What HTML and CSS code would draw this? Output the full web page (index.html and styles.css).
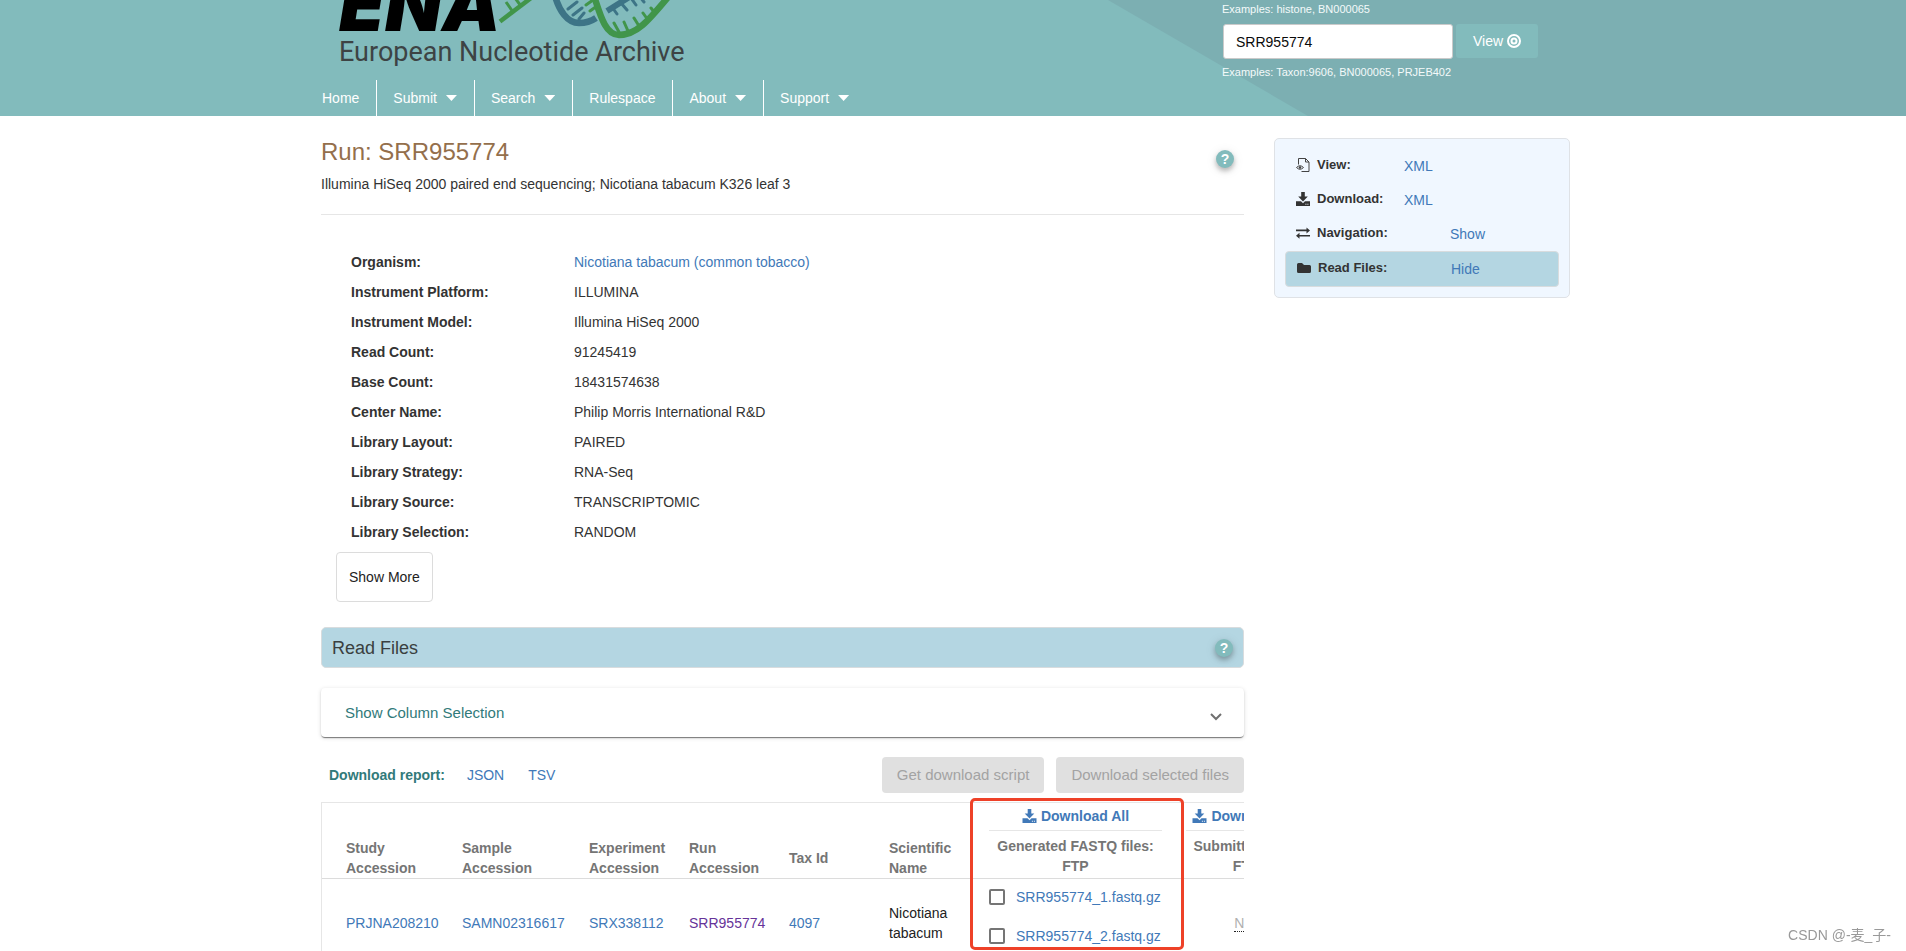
FILE: index.html
```html
<!DOCTYPE html>
<html lang="en">
<head>
<meta charset="utf-8">
<title>ENA Browser - SRR955774</title>
<link rel="stylesheet" href="styles.css">
</head>
<body>
<svg class="symbols" aria-hidden="true">
  <symbol id="i-download" viewBox="0 0 14 14"><path d="M5.200 0h3.600v4.600h3L7 9.400 2.200 4.600h3z"/><path d="M0 9.300h5L7 11.200l2-1.900h5V14H0zM9.400 12.700h1v-1h-1zm2 0h1v-1h-1z" fill-rule="evenodd"/></symbol>
</svg>
<header class="masthead">
  <div class="masthead-inner">
    <div class="brand">
      <svg class="logo" viewBox="0 0 350 66" role="img" aria-label="ENA European Nucleotide Archive">
        <text class="logo-ena" x="4" y="31">ENA</text>
        <g fill="none">
          <g stroke="#41954a">
            <path d="M165 21.500 196-2" stroke-width="4.500"/>
            <path d="M171 2l7 10M180-2l6 8" stroke-width="3"/>
          </g>
          <g stroke="#3d7486">
            <path d="M220-4C224 10 232 23 244 23 250 23 255 22 261 18" stroke-width="6.500"/>
            <path d="M233 9l9-7M238 15l9-7M244 19l5-6" stroke-width="3" stroke-linecap="round"/>
            <path d="M272 11 296-4" stroke-width="6"/>
            <path d="M277 7l5 7M286 3l6 7M296-2l5 7M305-3l4 5" stroke-width="3" stroke-linecap="round"/>
          </g>
          <g stroke="#41954a">
            <path d="M259-4C265 14 270 35 284 35 302 35 314 20 334-4" stroke-width="6.500"/>
            <path d="M251 5l7-5M255 11l7-5M279 23l5 9M289 22l4 9M299 18l5 8M308 13l5 7M316 8l4 5" stroke-width="3" stroke-linecap="round"/>
          </g>
        </g>
        <text class="logo-name" x="4" y="61">European Nucleotide Archive</text>
      </svg>
      <nav class="nav">
        <a href="#">Home</a>
        <a href="#" class="has-menu">Submit</a>
        <a href="#" class="has-menu">Search</a>
        <a href="#">Rulespace</a>
        <a href="#" class="has-menu">About</a>
        <a href="#" class="has-menu">Support</a>
      </nav>
    </div>
    <form class="search">
      <p class="hint">Examples: histone, BN000065</p>
      <div class="search-row">
        <input class="search-input" type="text" aria-label="View accession" value="SRR955774">
        <button class="search-btn" type="button">View
          <svg width="14" height="14" viewBox="0 0 14 14" fill="none" stroke="#fff" stroke-width="2"><circle cx="7" cy="7" r="6"/><circle cx="7" cy="7" r="2.500"/></svg>
        </button>
      </div>
      <p class="hint">Examples: Taxon:9606, BN000065, PRJEB402</p>
    </form>
  </div>
</header>

<div class="page">
  <main class="main">
    <div class="title-row">
      <div>
        <h1>Run: SRR955774</h1>
        <p class="subtitle">Illumina HiSeq 2000 paired end sequencing; Nicotiana tabacum K326 leaf 3</p>
      </div>
      <button class="help" type="button" aria-label="Help">?</button>
    </div>

    <dl class="fields">
      <dt>Organism:</dt><dd><a href="#">Nicotiana tabacum (common tobacco)</a></dd>
      <dt>Instrument Platform:</dt><dd>ILLUMINA</dd>
      <dt>Instrument Model:</dt><dd>Illumina HiSeq 2000</dd>
      <dt>Read Count:</dt><dd>91245419</dd>
      <dt>Base Count:</dt><dd>18431574638</dd>
      <dt>Center Name:</dt><dd>Philip Morris International R&amp;D</dd>
      <dt>Library Layout:</dt><dd>PAIRED</dd>
      <dt>Library Strategy:</dt><dd>RNA-Seq</dd>
      <dt>Library Source:</dt><dd>TRANSCRIPTOMIC</dd>
      <dt>Library Selection:</dt><dd>RANDOM</dd>
    </dl>
    <button class="show-more" type="button">Show More</button>

    <div class="section-bar">
      <h2>Read Files</h2>
      <button class="help" type="button" aria-label="Help">?</button>
    </div>

    <button class="expander" type="button">
      <span>Show Column Selection</span>
      <svg class="chevron" width="12" height="8" viewBox="0 0 12 8" fill="none" stroke="#707070" stroke-width="2"><path d="M1 1l5 5 5-5"/></svg>
    </button>

    <div class="report-row">
      <div class="report-links">
        <strong>Download report:</strong>
        <a href="#">JSON</a>
        <a href="#">TSV</a>
      </div>
      <button class="grey-btn" type="button" disabled>Get download script</button>
      <button class="grey-btn" type="button" disabled>Download selected files</button>
    </div>

    <div class="table-wrap">
      <div class="table-clip">
        <table class="files">
          <colgroup><col class="c-study"><col class="c-sample"><col class="c-exp"><col class="c-run"><col class="c-tax"><col class="c-sci"><col class="c-fastq"><col class="c-sub"></colgroup>
          <thead>
            <tr>
              <th><span>Study Accession</span></th>
              <th><span>Sample Accession</span></th>
              <th><span>Experiment Accession</span></th>
              <th><span>Run Accession</span></th>
              <th><span>Tax Id</span></th>
              <th><span>Scientific Name</span></th>
              <th class="file-head">
                <a class="dl-all" href="#"><svg width="15" height="14"><use href="#i-download"/></svg>Download All</a>
                <div>Generated FASTQ files: FTP</div>
              </th>
              <th class="file-head">
                <a class="dl-all" href="#"><svg width="15" height="14"><use href="#i-download"/></svg>Download All</a>
                <div>Submitted files: FTP</div>
              </th>
            </tr>
          </thead>
          <tbody>
            <tr>
              <td><a href="#">PRJNA208210</a></td>
              <td><a href="#">SAMN02316617</a></td>
              <td><a href="#">SRX338112</a></td>
              <td><a class="visited" href="#">SRR955774</a></td>
              <td><a href="#">4097</a></td>
              <td>Nicotiana tabacum</td>
              <td class="file-cell">
                <div class="file"><input type="checkbox" aria-label="SRR955774_1.fastq.gz"><a href="#">SRR955774_1.fastq.gz</a></div>
                <div class="file"><input type="checkbox" aria-label="SRR955774_2.fastq.gz"><a href="#">SRR955774_2.fastq.gz</a></div>
              </td>
              <td class="na-cell"><abbr title="Not available">N/A</abbr></td>
            </tr>
          </tbody>
        </table>
      </div>
      <div class="callout"></div>
    </div>
  </main>

  <aside class="side">
    <div class="side-row">
      <svg width="14" height="14" viewBox="0 0 14 14" fill="none" stroke="#444"><path d="M2.500 6.500V.5H9.500L13 4V13.500H5.500M9.500.5V4H13"/><path d="M.5 9.500Q4 6 7.500 9.500 4 13 .5 9.500z"/><circle cx="4" cy="9.500" r="1.200" fill="#444" stroke="none"/></svg>
      <strong>View:</strong><a href="#">XML</a>
    </div>
    <div class="side-row">
      <svg width="14" height="14" fill="#333"><use href="#i-download"/></svg>
      <strong>Download:</strong><a href="#">XML</a>
    </div>
    <div class="side-row wide">
      <svg width="14" height="14" viewBox="0 0 14 14" fill="#333"><path d="M0 3.600h10.500V1.500L14 4.500l-3.500 3V5.300H0zM14 8.900H3.500V6.800L0 9.800l3.500 3v-2.200H14z"/></svg>
      <strong>Navigation:</strong><a href="#">Show</a>
    </div>
    <div class="side-row wide active">
      <svg width="14" height="14" viewBox="0 0 14 14" fill="#333"><path d="M0 3.500Q0 2 1.500 2H5l2 2h5.500Q14 4 14 5.500v5Q14 12 12.500 12h-11Q0 12 0 10.500z"/></svg>
      <strong>Read Files:</strong><a href="#">Hide</a>
    </div>
  </aside>
</div>
<div class="watermark">CSDN @-麦_子-</div>
</body>
</html>
```

FILE: styles.css
```css
* { box-sizing: border-box; }

body {
  margin: 0;
  height: 100vh;
  overflow: hidden;
  background: #fff;
  color: #333;
  font: 14px/20px "Liberation Sans", Arial, "Noto Sans CJK SC", sans-serif;
}

a { color: #4179b8; text-decoration: none; }
button, input { font: inherit; }
h1, h2, p, dl, dd { margin: 0; }
.symbols { position: absolute; width: 0; height: 0; }

/* Masthead */
.masthead { position: relative; background: #82bbbc; overflow: hidden; }
.masthead::before {
  content: "";
  position: absolute;
  top: 0;
  bottom: 0;
  left: calc(50% + 155px);
  right: 0;
  background: #7cafb2;
  clip-path: polygon(0 0, 100% 0, 100% 100%, 200px 100%);
}
.masthead-inner {
  position: relative;
  display: flex;
  justify-content: space-between;
  max-width: 1266px;
  margin: 0 auto;
}
.logo { display: block; width: 350px; height: 66px; margin-left: 15px; }
.logo-ena { font: italic 900 74px Inter, sans-serif; fill: #000; }
.logo-name { font: 27px Roboto, sans-serif; fill: #3d4344; }
.nav { display: flex; margin-top: 14px; }
.nav a {
  display: flex;
  align-items: center;
  gap: 9px;
  height: 36px;
  padding: 0 17px 0 16px;
  border-left: 1px solid #fff;
  color: #fff;
  font-weight: 500;
}
.nav a:first-child { border-left: 0; padding-left: 2px; }
.has-menu::after {
  content: "";
  width: 11px;
  height: 6px;
  background: #fff;
  clip-path: polygon(0 0, 100% 0, 50% 100%);
}
.search { width: 364px; padding-top: 1px; }
.hint { color: #f4fafa; font-size: 11px; line-height: 16px; }
.search-row { display: flex; gap: 3px; padding: 7px 0 5px 1px; }
.search-input {
  width: 230px;
  height: 35px;
  padding: 0 12px;
  border: 1px solid #cacaca;
  border-radius: 3px;
  background: #fff;
  color: #0a0a0a;
}
.search-btn {
  display: flex;
  align-items: center;
  justify-content: center;
  gap: 4px;
  width: 82px;
  height: 34px;
  border: 0;
  border-radius: 3px;
  background: #82bbbc;
  color: #fff;
}

/* Columns */
.page {
  display: flex;
  align-items: flex-start;
  gap: 30px;
  max-width: 1266px;
  margin: 0 auto;
  padding: 22px 16px 0 1px;
}
.main { flex: 1; min-width: 0; }

.title-row {
  display: flex;
  justify-content: space-between;
  align-items: flex-start;
  padding-bottom: 20px;
  border-bottom: 1px solid #e6e6e6;
}
h1 { color: #946f4c; font-size: 24px; font-weight: 500; line-height: 28px; }
.subtitle { margin-top: 8px; }
.help {
  width: 18px;
  height: 18px;
  margin: 12px 10px 0 0;
  padding: 0;
  border: 0;
  border-radius: 50%;
  background: #82bbbc;
  box-shadow: 0 3px 5px rgba(0, 0, 0, .25), 0 2px 12px rgba(0, 0, 0, .1);
  color: #fff;
  font-size: 14px;
  font-weight: 700;
  line-height: 18px;
}

.fields {
  display: grid;
  grid-template-columns: 223px 1fr;
  grid-auto-rows: 30px;
  align-items: center;
  padding: 32px 0 0 30px;
}
.fields dt { font-weight: 700; }
.show-more {
  display: block;
  height: 50px;
  margin: 5px 0 25px 15px;
  padding: 0 12px;
  border: 1px solid #dcdcdc;
  border-radius: 4px;
  background: #fff;
  color: #222;
}

.section-bar {
  display: flex;
  justify-content: space-between;
  align-items: center;
  height: 41px;
  padding: 0 10px;
  border: 1px solid #d8dcde;
  border-radius: 5px;
  background: #b4d6e2;
}
.section-bar .help { margin: 0; }
h2 { color: #3a3f40; font-size: 18px; font-weight: 500; line-height: 24px; }

.expander {
  display: flex;
  justify-content: space-between;
  align-items: center;
  width: 100%;
  height: 49px;
  margin: 20px 0;
  padding: 0 22px 0 24px;
  border: 0;
  border-radius: 4px;
  background: #fff;
  box-shadow: 0 2px 1px -1px rgba(0, 0, 0, .35), 0 1px 1px rgba(0, 0, 0, .2), 0 1px 4px rgba(0, 0, 0, .15);
  color: #317a7a;
  font-size: 15px;
}
.chevron { margin-top: 8px; }

.report-row { display: flex; align-items: center; gap: 12px; }
.report-links { display: flex; flex: 1; gap: 24px; padding-left: 8px; }
.report-links strong { color: #317a7a; margin-right: -2px; }
.grey-btn {
  height: 36px;
  padding: 0 15px;
  border: 0;
  border-radius: 4px;
  background: #e0e0e0;
  color: #a3a3a3;
  font-size: 15px;
}

/* File table */
.table-wrap { position: relative; margin-top: 9px; }
.table-clip { overflow: hidden; border-top: 1px solid #e6e6e6; border-left: 1px solid #e6e6e6; }
.files { width: 1008px; table-layout: fixed; border-collapse: separate; border-spacing: 0; }
.files th, .files td { padding: 0; text-align: left; }
.files th { height: 76px; border-bottom: 1px solid #dcdcdc; color: #757575; font-weight: 700; vertical-align: bottom; }
.files th span { display: inline-flex; align-items: center; width: 82px; height: 40px; vertical-align: bottom; }
.files td { height: 88px; color: #222; }
.files th:first-child, .files td:first-child { padding-left: 24px; }
.c-study { width: 140px; }
.c-sample { width: 127px; }
.c-exp { width: 100px; }
.c-run { width: 100px; }
.c-tax { width: 100px; }
.c-sci { width: 100px; }
.c-fastq { width: 197px; }
.c-sub { width: 144px; }
.files td:nth-child(6) { padding-right: 20px; }
.files .file-head { padding-right: 24px; text-align: center; vertical-align: top; }
.file-head div { padding: 5px 5px 0; border-top: 1px solid #e6e6e6; }
.dl-all { display: flex; justify-content: center; align-items: center; gap: 4px; height: 27px; padding-bottom: 2px; }
.dl-all svg { fill: #4179b8; }
.files .file-cell { vertical-align: top; }
.file { display: flex; align-items: center; gap: 11px; height: 35px; margin-bottom: 4px; }
.file input {
  appearance: none;
  width: 16px;
  height: 16px;
  margin: 0;
  border: 2px solid #757575;
  border-radius: 2px;
  background: #fff;
}
.visited { color: #663399; }
.files .na-cell { padding-right: 24px; text-align: center; color: #b0b0b0; }
.na-cell abbr { border-bottom: 1px dotted #222; text-decoration: none; }
.callout {
  position: absolute;
  top: -4px;
  left: 649px;
  width: 214px;
  height: 152px;
  border: 3px solid #ee4128;
  border-radius: 5px;
}

/* Side panel */
.side {
  width: 296px;
  padding: 10px;
  border: 1px solid #dfe2e6;
  border-radius: 5px;
  background: #f0f7ff;
}
.side-row {
  display: grid;
  grid-template-columns: 21px 87px 1fr;
  align-items: center;
  height: 34px;
  padding-left: 11px;
}
.side-row.wide { grid-template-columns: 21px 133px 1fr; }
.side-row svg, .side-row strong { margin-bottom: 2px; }
.side-row strong { font-size: 13px; }
.side-row.active { height: 36px; padding-left: 11px; border: 1px solid #d8dcde; border-radius: 4px; background: #b4d6e2; }

.watermark { position: fixed; right: 15px; bottom: 6px; color: #999; font-size: 14px; }
```
